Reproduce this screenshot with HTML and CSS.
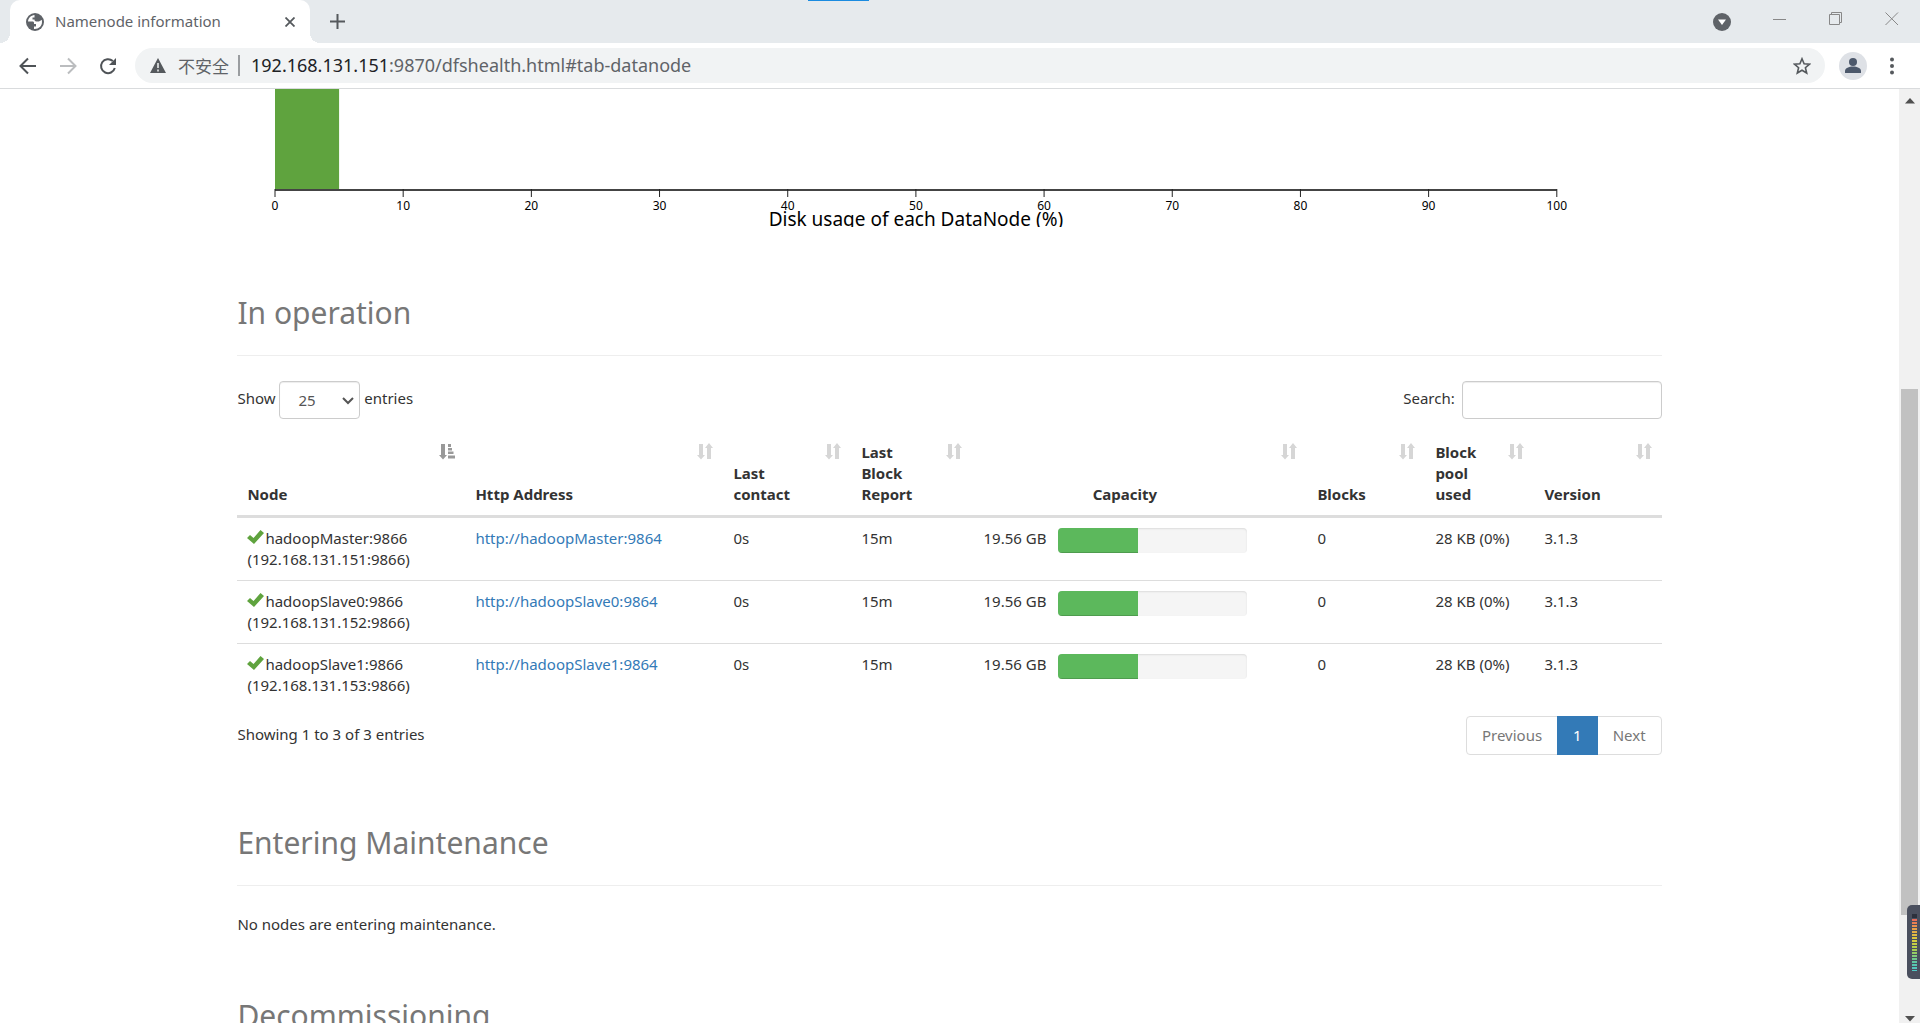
FILE: index.html
```html
<!DOCTYPE html>
<html lang="en">
<head>
<meta charset="utf-8">
<title>Namenode information</title>
<link rel="stylesheet" href="styles.css">
</head>
<body>
<svg class="defs" aria-hidden="true">
  <symbol id="sort" viewBox="0 0 16 17"><path d="M2 1h4v11h2l-4 4.500L0 12h2zM12 0l4 5h-2v11h-4V5H8z"/></symbol>
  <symbol id="sort-asc" viewBox="0 0 16 17"><path d="M2 1h4v11h2l-4 4.500L0 12h2zM9 1h3v3H9zM9 5h4v2.500H9zM9 8.500h5.500V11H9zM9 12.500h7v3H9z"/></symbol>
  <symbol id="check" viewBox="0 0 17 14"><path d="M0 8l3-3 3.500 3L13.500 0 17 3 7 14z"/></symbol>
</svg>

<header class="browser">
  <div class="tabs">
    <div class="tab">
      <svg class="globe" viewBox="0 0 18 18"><circle cx="9" cy="9" r="9" fill="#5f6368"/><path d="M8.500 2C5 2.300 2.300 5 2 8.500h4.500c1 0 1.500.5 1.500 1.500v1h2v2.500H8V16c4.500.3 8-3 8-7 0-.8-.1-1.500-.4-2.200L13 8.500h-2.500C9 8.500 8.500 7.500 8.500 6.500h-2V4.500h2z" fill="#fff"/><path d="M10 2.500c-.5 1.500.5 2.500 2 2.500l1 2 2.500-1" fill="none" stroke="#5f6368" stroke-width="1.500"/></svg>
      <span class="tab-title">Namenode information</span>
      <button class="plain" aria-label="Close tab"><svg width="10" height="10" viewBox="0 0 10 10"><path d="M.5.5l9 9M9.500.5l-9 9" stroke="#55595d" stroke-width="1.800"/></svg></button>
    </div>
    <button class="plain new-tab" aria-label="New tab"><svg width="15" height="15" viewBox="0 0 15 15"><path d="M7.500 0v15M0 7.500h15" stroke="#55595d" stroke-width="2"/></svg></button>
    <span class="drag-mark"></span>
    <div class="window-buttons">
      <button class="plain search-tabs" aria-label="Search tabs"><svg width="18" height="18" viewBox="0 0 18 18"><circle cx="9" cy="9" r="9" fill="#5f6368"/><path d="M5 6.500h8L9 12z" fill="#fff"/></svg></button>
      <button class="plain" aria-label="Minimize"><svg width="14" height="14" viewBox="0 0 14 14"><path d="M0 7.500h13" stroke="#888"/></svg></button>
      <button class="plain" aria-label="Restore"><svg width="14" height="14" viewBox="0 0 14 14"><path d="M.5 2.500h10v10H.5zM2.500 2.500v-2h10v10h-2" fill="none" stroke="#888"/></svg></button>
      <button class="plain" aria-label="Close"><svg width="14" height="14" viewBox="0 0 14 14"><path d="M.5.5l12.500 12.500M13 .5L.5 13" stroke="#888"/></svg></button>
    </div>
  </div>
  <div class="toolbar">
    <nav class="history">
      <button class="plain" aria-label="Back"><svg width="18" height="18" viewBox="0 0 18 18"><path d="M17 9H2M9 1.500L1.500 9 9 16.500" fill="none" stroke="#4f5357" stroke-width="2"/></svg></button>
      <button class="plain" aria-label="Forward"><svg width="18" height="18" viewBox="0 0 18 18"><path d="M1 9h15M9 1.500L16.500 9 9 16.500" fill="none" stroke="#bbbdbf" stroke-width="2"/></svg></button>
      <button class="plain" aria-label="Reload"><svg width="18" height="18" viewBox="0 0 18 18"><path d="M15.800 11a7 7 0 1 1-2-7" fill="none" stroke="#4f5357" stroke-width="2"/><path d="M17 1v7h-7z" fill="#4f5357"/></svg></button>
    </nav>
    <div class="address">
      <svg width="16" height="15" viewBox="0 0 16 15"><path d="M8 0l8 15H0z" fill="#55595d"/><path d="M8 5v5M8 11.500v2" stroke="#f1f3f4" stroke-width="1.500"/></svg>
      <span class="insecure">不安全</span>
      <span class="url"><b>192.168.131.151</b>:9870/dfshealth.html#tab-datanode</span>
      <button class="plain star" aria-label="Bookmark"><svg width="18" height="18" viewBox="0 0 18 18"><path d="M9 1.800l2.100 5 5.400.4-4.100 3.500 1.300 5.300L9 13.200 4.300 16l1.300-5.300-4.100-3.500 5.400-.4z" fill="none" stroke="#55595d" stroke-width="1.600"/></svg></button>
    </div>
    <button class="plain" aria-label="Profile"><svg width="28" height="28" viewBox="0 0 28 28"><circle cx="14" cy="14" r="14" fill="#dee1e6"/><circle cx="14" cy="10" r="4" fill="#4c586b"/><path d="M6 21v-2c0-3 4-4.500 8-4.500s8 1.500 8 4.500v2z" fill="#4c586b"/></svg></button>
    <button class="plain menu" aria-label="Menu"><svg width="4" height="18" viewBox="0 0 4 18"><g fill="#55595d"><circle cx="2" cy="2.500" r="2"/><circle cx="2" cy="9" r="2"/><circle cx="2" cy="15.500" r="2"/></g></svg></button>
  </div>
</header>

<div class="viewport">
  <main class="page">
    <svg class="chart" role="img" aria-label="Disk usage histogram">
      <svg x="38" width="90%" height="138" class="plot">
        <rect x="0" y="0" width="5%" height="100" fill="#5fa33e"/>
        <line x1="0" x2="100%" y1="101" y2="101" class="axis"/>
        <g class="ticks">
          <line x1="0%" x2="0%" y1="100" y2="108"/><line x1="10%" x2="10%" y1="100" y2="108"/><line x1="20%" x2="20%" y1="100" y2="108"/><line x1="30%" x2="30%" y1="100" y2="108"/><line x1="40%" x2="40%" y1="100" y2="108"/><line x1="50%" x2="50%" y1="100" y2="108"/><line x1="60%" x2="60%" y1="100" y2="108"/><line x1="70%" x2="70%" y1="100" y2="108"/><line x1="80%" x2="80%" y1="100" y2="108"/><line x1="90%" x2="90%" y1="100" y2="108"/><line x1="100%" x2="100%" y1="100" y2="108"/>
        </g>
        <g class="tick-labels">
          <text x="0%" y="121">0</text><text x="10%" y="121">10</text><text x="20%" y="121">20</text><text x="30%" y="121">30</text><text x="40%" y="121">40</text><text x="50%" y="121">50</text><text x="60%" y="121">60</text><text x="70%" y="121">70</text><text x="80%" y="121">80</text><text x="90%" y="121">90</text><text x="100%" y="121">100</text>
        </g>
        <text class="chart-title" x="50%" y="137">Disk usage of each DataNode (%)</text>
      </svg>
    </svg>

    <section>
      <h2>In operation</h2>
      <div class="controls">
        <label>Show <span class="picker"><select><option>25</option></select><svg width="12" height="8" viewBox="0 0 12 8"><path d="M1 1l5 5 5-5" fill="none" stroke="#555" stroke-width="2"/></svg></span> entries</label>
        <label class="search">Search: <input type="search"></label>
      </div>
      <table>
        <colgroup><col class="c-node"><col class="c-http"><col class="c-contact"><col class="c-report"><col class="c-capacity"><col class="c-blocks"><col class="c-pool"><col class="c-version"></colgroup>
        <thead>
          <tr>
            <th>Node<button class="sort active" aria-label="Sort by node"><svg><use href="#sort-asc"/></svg></button></th>
            <th>Http Address<button class="sort" aria-label="Sort by address"><svg><use href="#sort"/></svg></button></th>
            <th>Last contact<button class="sort" aria-label="Sort by last contact"><svg><use href="#sort"/></svg></button></th>
            <th>Last Block Report<button class="sort" aria-label="Sort by report"><svg><use href="#sort"/></svg></button></th>
            <th class="center">Capacity<button class="sort" aria-label="Sort by capacity"><svg><use href="#sort"/></svg></button></th>
            <th>Blocks<button class="sort" aria-label="Sort by blocks"><svg><use href="#sort"/></svg></button></th>
            <th>Block pool used<button class="sort" aria-label="Sort by pool used"><svg><use href="#sort"/></svg></button></th>
            <th>Version<button class="sort" aria-label="Sort by version"><svg><use href="#sort"/></svg></button></th>
          </tr>
        </thead>
        <tbody>
          <tr>
            <td><svg class="check"><use href="#check"/></svg>hadoopMaster:9866<br>(192.168.131.151:9866)</td>
            <td><a href="#">http://hadoopMaster:9864</a></td><td>0s</td><td>15m</td>
            <td><div class="capacity"><span>19.56 GB</span><div class="bar"><div class="fill" style="width:42%"></div></div></div></td>
            <td>0</td><td>28 KB (0%)</td><td>3.1.3</td>
          </tr>
          <tr>
            <td><svg class="check"><use href="#check"/></svg>hadoopSlave0:9866<br>(192.168.131.152:9866)</td>
            <td><a href="#">http://hadoopSlave0:9864</a></td><td>0s</td><td>15m</td>
            <td><div class="capacity"><span>19.56 GB</span><div class="bar"><div class="fill" style="width:42%"></div></div></div></td>
            <td>0</td><td>28 KB (0%)</td><td>3.1.3</td>
          </tr>
          <tr>
            <td><svg class="check"><use href="#check"/></svg>hadoopSlave1:9866<br>(192.168.131.153:9866)</td>
            <td><a href="#">http://hadoopSlave1:9864</a></td><td>0s</td><td>15m</td>
            <td><div class="capacity"><span>19.56 GB</span><div class="bar"><div class="fill" style="width:42%"></div></div></div></td>
            <td>0</td><td>28 KB (0%)</td><td>3.1.3</td>
          </tr>
        </tbody>
      </table>
      <div class="table-footer">
        <span>Showing 1 to 3 of 3 entries</span>
        <nav class="pagination"><a href="#">Previous</a><a href="#" class="current">1</a><a href="#">Next</a></nav>
      </div>
    </section>

    <section>
      <h2>Entering Maintenance</h2>
      <p>No nodes are entering maintenance.</p>
    </section>

    <section>
      <h2>Decommissioning</h2>
    </section>
  </main>
  <div class="scrollbar">
    <svg width="10" height="6" viewBox="0 0 10 6"><path d="M0 5.500L5 0l5 5.500z" fill="#505050"/></svg>
    <div class="track"><div class="thumb"></div></div>
    <svg width="10" height="6" viewBox="0 0 10 6"><path d="M0 0l5 5.500L10 0z" fill="#505050"/></svg>
  </div>
  <div class="meter"><span class="meter-cap"></span><span class="meter-levels"></span></div>
</div>
</body>
</html>
```
FILE: styles.css
```css
* { box-sizing: border-box; }

body {
  margin: 0;
  height: 100vh;
  display: flex;
  flex-direction: column;
  overflow: hidden;
  background: #fff;
  color: #333;
  font: 15px/21px "Noto Sans", "Noto Sans CJK SC", sans-serif;
}

svg { display: block; flex: none; }
.defs { display: none; }
.plain { border: 0; padding: 0; background: none; }

/* Browser frame */
.browser { flex: none; border-bottom: 1px solid #d9dbdd; }
.tabs {
  position: relative;
  display: flex;
  align-items: stretch;
  height: 43px;
  padding-left: 10px;
  background: #e6eaed;
}
.tab {
  position: relative;
  display: flex;
  align-items: center;
  width: 300px;
  padding: 0 15px 0 16px;
  border-radius: 10px 10px 0 0;
  background: #fff;
}
.tab::before, .tab::after {
  content: "";
  position: absolute;
  bottom: 0;
  width: 10px;
  height: 10px;
}
.tab::before { left: -10px; background: radial-gradient(circle at 0 0, transparent 10px, #fff 10px); }
.tab::after { right: -10px; background: radial-gradient(circle at 100% 0, transparent 10px, #fff 10px); }
.globe { width: 18px; height: 18px; margin-right: 11px; }
.tab-title { flex: 1; color: #5f6368; }
.new-tab { margin-left: 20px; }
.drag-mark {
  position: absolute;
  top: 0;
  left: calc(42% + 2px);
  width: 61px;
  height: 1px;
  background: #1a8be0;
}
.window-buttons {
  display: flex;
  align-items: center;
  gap: 42px;
  margin-left: auto;
  padding: 0 21px 5px 0;
}
.search-tabs { padding-top: 6px; }
.toolbar {
  display: flex;
  align-items: center;
  height: 45px;
  padding: 0 26px 0 19px;
}
.history { display: flex; gap: 22px; margin-right: 18px; }
.address {
  flex: 1;
  display: flex;
  align-items: center;
  height: 35px;
  margin-right: 14px;
  padding: 0 14px 0 15px;
  border-radius: 18px;
  background: #f1f3f4;
  color: #5f6368;
  font-size: 18px;
}
.insecure {
  margin-left: 12px;
  padding-right: 9px;
  border-right: 2px solid #9a9da0;
  font-family: "Noto Sans CJK SC", sans-serif;
  font-size: 17px;
}
.url { flex: 1; margin-left: 11px; }
.url b { font-weight: 400; color: #202124; }
.menu { margin-left: 23px; }

/* Page area */
.viewport { position: relative; flex: 1; min-height: 0; display: flex; overflow: hidden; }
.page { flex: 1; min-width: 0; padding: 0 calc(12% + 7px); }

.chart { width: 100%; height: 138px; margin-bottom: 68px; overflow: hidden; }
.plot { overflow: visible; }
.axis { stroke: #444; stroke-width: 2; }
.ticks { stroke: #222; stroke-width: 1; }
.tick-labels { font-size: 12px; fill: #000; text-anchor: middle; }
.chart-title { font-size: 19px; fill: #000; text-anchor: middle; }

section { margin-bottom: 63px; }
h2 {
  margin: 0 0 25px;
  padding-bottom: 24px;
  border-bottom: 1px solid #eee;
  color: #777;
  font-size: 30px;
  line-height: 36px;
  font-weight: 400;
}
p { margin: 28px 0 0; }

.controls { display: flex; justify-content: space-between; margin-bottom: 13px; }
select, input {
  height: 38px;
  border: 1px solid #ccc;
  border-radius: 4px;
  background: #fff;
  box-shadow: inset 0 1px 1px rgba(0, 0, 0, .075);
  color: #555;
  font: inherit;
  vertical-align: middle;
}
.picker { position: relative; display: inline-block; vertical-align: middle; }
.picker svg { position: absolute; right: 6px; top: 16px; pointer-events: none; }
select { appearance: none; width: 81px; padding: 0 18px; }
input { width: 200px; margin-left: 3px; }

table { width: 100%; table-layout: fixed; border-collapse: separate; border-spacing: 0; }
.c-node { width: 228px; }
.c-http { width: 258px; }
.c-contact { width: 128px; }
.c-report { width: 121px; }
.c-capacity { width: 335px; }
.c-blocks { width: 118px; }
.c-pool { width: 109px; }
.c-version { width: auto; }
th {
  position: relative;
  padding: 10px 40px 10px 10px;
  border-bottom: 3px solid #ddd;
  text-align: left;
  vertical-align: bottom;
}
.center { text-align: center; }
.sort {
  position: absolute;
  top: 11px;
  right: 10px;
  padding: 0;
  border: 0;
  background: none;
}
.sort svg { width: 16px; height: 17px; fill: #d6d6d6; }
.sort.active svg { fill: #999; }
td { padding: 10px; vertical-align: top; white-space: nowrap; }
tr + tr td { border-top: 1px solid #ddd; }
a { color: #337ab7; text-decoration: none; }
.check { display: inline-block; width: 17px; height: 14px; margin-right: 1px; fill: #5fa33e; }
.capacity { display: flex; gap: 12px; }
.capacity span { width: 64px; text-align: right; }
.bar {
  width: 189px;
  height: 25px;
  overflow: hidden;
  border-radius: 4px;
  background: #f5f5f5;
  box-shadow: inset 0 1px 2px rgba(0, 0, 0, .1);
}
.fill { height: 100%; background: #5cb85c; box-shadow: inset 0 -1px 0 rgba(0, 0, 0, .15); }

.table-footer { display: flex; justify-content: space-between; align-items: flex-start; margin: 10px 0 70px; }
.table-footer span { padding-top: 8px; }
.pagination { display: flex; border: 1px solid #ddd; border-radius: 4px; }
.pagination a { padding: 8px 15px; color: #777; }
.pagination .current { margin: -1px 0; padding: 9px 16px; background: #337ab7; color: #fff; }

/* Scrollbar and floating level meter */
.scrollbar {
  flex: none;
  display: flex;
  flex-direction: column;
  align-items: center;
  width: 21px;
  padding: 9px 0 1px;
  background: #f1f1f1;
}
.track { flex: 1; width: 17px; padding-top: 285px; }
.thumb { height: 66%; min-height: 526px; background: #c1c1c1; }
.meter {
  position: absolute;
  right: 0;
  bottom: 44px;
  display: flex;
  flex-direction: column;
  width: 13px;
  height: 74px;
  padding: 9px 3px 8px 5px;
  border-radius: 5px 0 0 5px;
  background: #4a4f5e;
}
.meter-cap { height: 4px; background: #2c303c; }
.meter-levels {
  flex: 1;
  background:
    repeating-linear-gradient(#4a4f5e 0 1px, transparent 1px 3px),
    linear-gradient(#e8605a, #e8a04a 20%, #dccb3c 40%, #a8cf50 60%, #58c8a8 85%, #50c8c8);
}
```
